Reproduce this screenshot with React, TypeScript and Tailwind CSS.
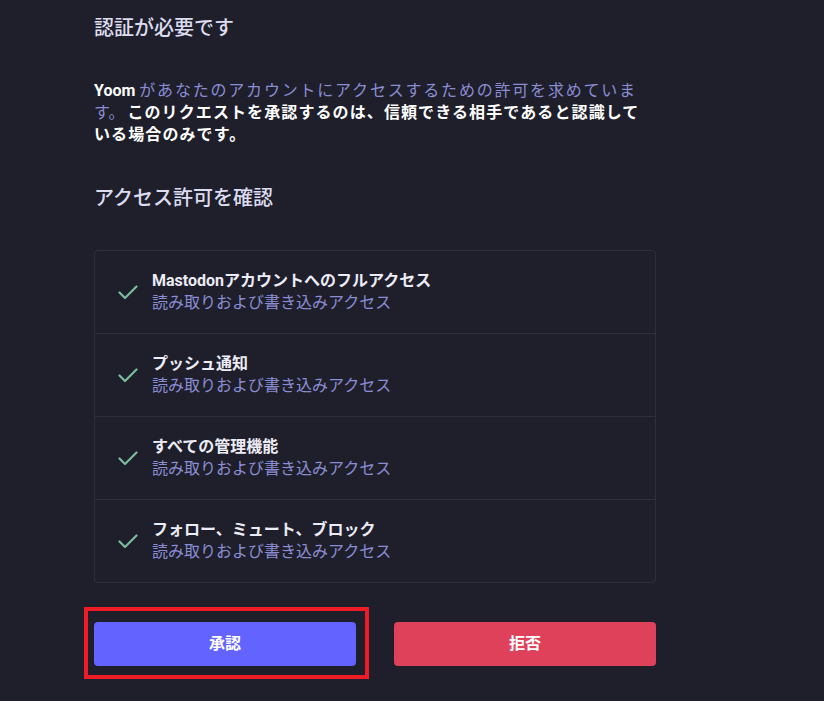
import React from 'react'

const scopes = [
  { title: 'Mastodonアカウントへのフルアクセス', desc: '読み取りおよび書き込みアクセス' },
  { title: 'プッシュ通知', desc: '読み取りおよび書き込みアクセス' },
  { title: 'すべての管理機能', desc: '読み取りおよび書き込みアクセス' },
  { title: 'フォロー、ミュート、ブロック', desc: '読み取りおよび書き込みアクセス' },
]

const Check = () => (
  <svg width="20" height="20" viewBox="0 0 20 20" fill="none" className="shrink-0">
    <path d="M1.5 10.5 L7 16 L18.5 4.5" stroke="#79bd9a" strokeWidth="2.2" strokeLinecap="round" strokeLinejoin="round" />
  </svg>
)

export default function App() {
  return (
    <div
      className="min-h-screen w-[824px] h-[701px] overflow-hidden bg-[#1f1f2b] text-[#d9dbef]"
      style={{ fontFamily: "Roboto, 'Noto Sans CJK JP', sans-serif" }}
    >
      <div className="ml-[94px] w-[562px] pt-[14px]">
        {/* Header */}
        <h1 className="text-[20px] leading-[28px] font-medium text-[#dcdcf0]">認証が必要です</h1>

        <p className="mt-[38px] w-[546px] text-[16px] leading-[22px] text-[#8a8dd4]">
          <strong className="font-bold text-white">Yoom</strong>{' '}
          <span className="tracking-[1.8px]">があなたのアカウントにアクセスするための許可を求めていま</span>
          <span className="mr-[3px]">す。</span>
          <strong className="font-bold text-white tracking-[1.1px]">
            このリクエストを承認するのは、信頼できる相手であると認識している場合のみです。
          </strong>
        </p>

        <h2 className="mt-[38px] text-[20px] leading-[28px] font-medium text-[#dcdcf0]">アクセス許可を確認</h2>

        {/* Scopes */}
        <ul className="mt-[38px] border border-[#2e2e3d] rounded-[4px]">
          {scopes.map((s, i) => (
            <li
              key={i}
              className={`flex items-center gap-[14px] pl-[23px] pr-6 py-[19px] ${i > 0 ? 'border-t border-[#2e2e3d]' : ''}`}
            >
              <Check />
              <div>
                <div className="text-[16px] leading-[22px] font-bold text-[#ececf6]">{s.title}</div>
                <div className="text-[16px] leading-[22px] text-[#8a8dd4]">{s.desc}</div>
              </div>
            </li>
          ))}
        </ul>

        {/* Actions */}
        <div className="mt-[39px] flex gap-[38px]">
          <div className="relative flex-1">
            <button className="w-full h-[44px] rounded-[4px] bg-[#6364ff] text-white text-[16px] font-bold">
              承認
            </button>
            <div className="absolute left-[-10px] right-[-13px] top-[-15px] bottom-[-13px] border-[4px] border-[#ee1c25] pointer-events-none" />
          </div>
          <button className="flex-1 h-[44px] rounded-[4px] bg-[#df405a] text-white text-[16px] font-bold">
            拒否
          </button>
        </div>
      </div>
    </div>
  )
}
